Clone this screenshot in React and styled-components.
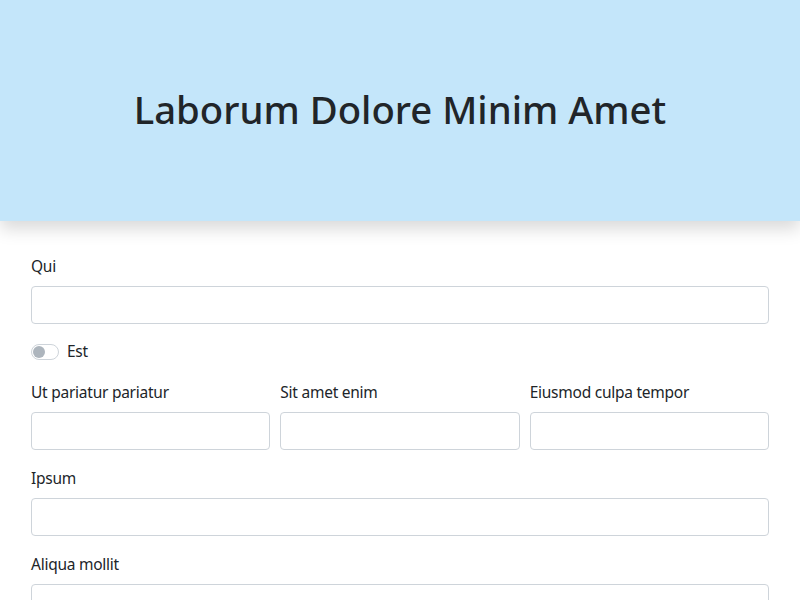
import React from "react";
import styled, { createGlobalStyle } from "styled-components";

const GlobalStyle = createGlobalStyle`
  * { box-sizing: border-box; }
  body {
    margin: 0;
    font-family: "Noto Sans", "Open Sans", sans-serif;
    font-size: 16px;
    line-height: 1.5;
    color: #212529;
    background: #fff;
  }
`;

const Header = styled.header`
  height: 221px;
  background: #c4e6fa;
  display: flex;
  align-items: center;
  justify-content: center;
  box-shadow: 0 8px 16px rgba(0, 0, 0, 0.15);
  position: relative;
`;

const Title = styled.h1`
  margin: 0 0 2px;
  font-size: 38.3px;
  font-weight: 500;
  line-height: 1.2;
`;

const Form = styled.form`
  padding: 33px 31px 0;
  display: flex;
  flex-direction: column;
  gap: 16px;
`;

const Field = styled.div`
  display: flex;
  flex-direction: column;
`;

const Label = styled.label`
  margin-bottom: 8px;
  line-height: 24px;
  font-size: 15.5px;
  letter-spacing: -0.25px;
  padding-top: 1px;
  margin-top: -1px;
`;

const Input = styled.input`
  height: 38px;
  width: 100%;
  border: 1px solid #ced4da;
  border-radius: 4px;
  padding: 6px 12px;
  font: inherit;
  color: #212529;
  background: #fff;
`;

const Row = styled.div`
  display: grid;
  grid-template-columns: repeat(3, 1fr);
  gap: 10px;
`;

const SwitchRow = styled.label`
  display: flex;
  align-items: center;
  gap: 8px;
  height: 24px;
  font-size: 15.5px;
  letter-spacing: -0.25px;
`;

const Track = styled.span`
  width: 28px;
  height: 16px;
  border: 1px solid #ced4da;
  border-radius: 8px;
  display: flex;
  align-items: center;
  padding-left: 1px;
`;

const Knob = styled.span`
  width: 12px;
  height: 12px;
  border-radius: 50%;
  background: #adb5bd;
`;

const TextField = ({ label }) => (
  <Field>
    <Label>{label}</Label>
    <Input type="text" />
  </Field>
);

export default function App() {
  return (
    <>
      <GlobalStyle />
      <Header>
        <Title>Laborum Dolore Minim Amet</Title>
      </Header>
      <Form>
        <TextField label="Qui" />
        <SwitchRow>
          <Track>
            <Knob />
          </Track>
          Est
        </SwitchRow>
        <Row>
          <TextField label="Ut pariatur pariatur" />
          <TextField label="Sit amet enim" />
          <TextField label="Eiusmod culpa tempor" />
        </Row>
        <TextField label="Ipsum" />
        <TextField label="Aliqua mollit" />
      </Form>
    </>
  );
}
